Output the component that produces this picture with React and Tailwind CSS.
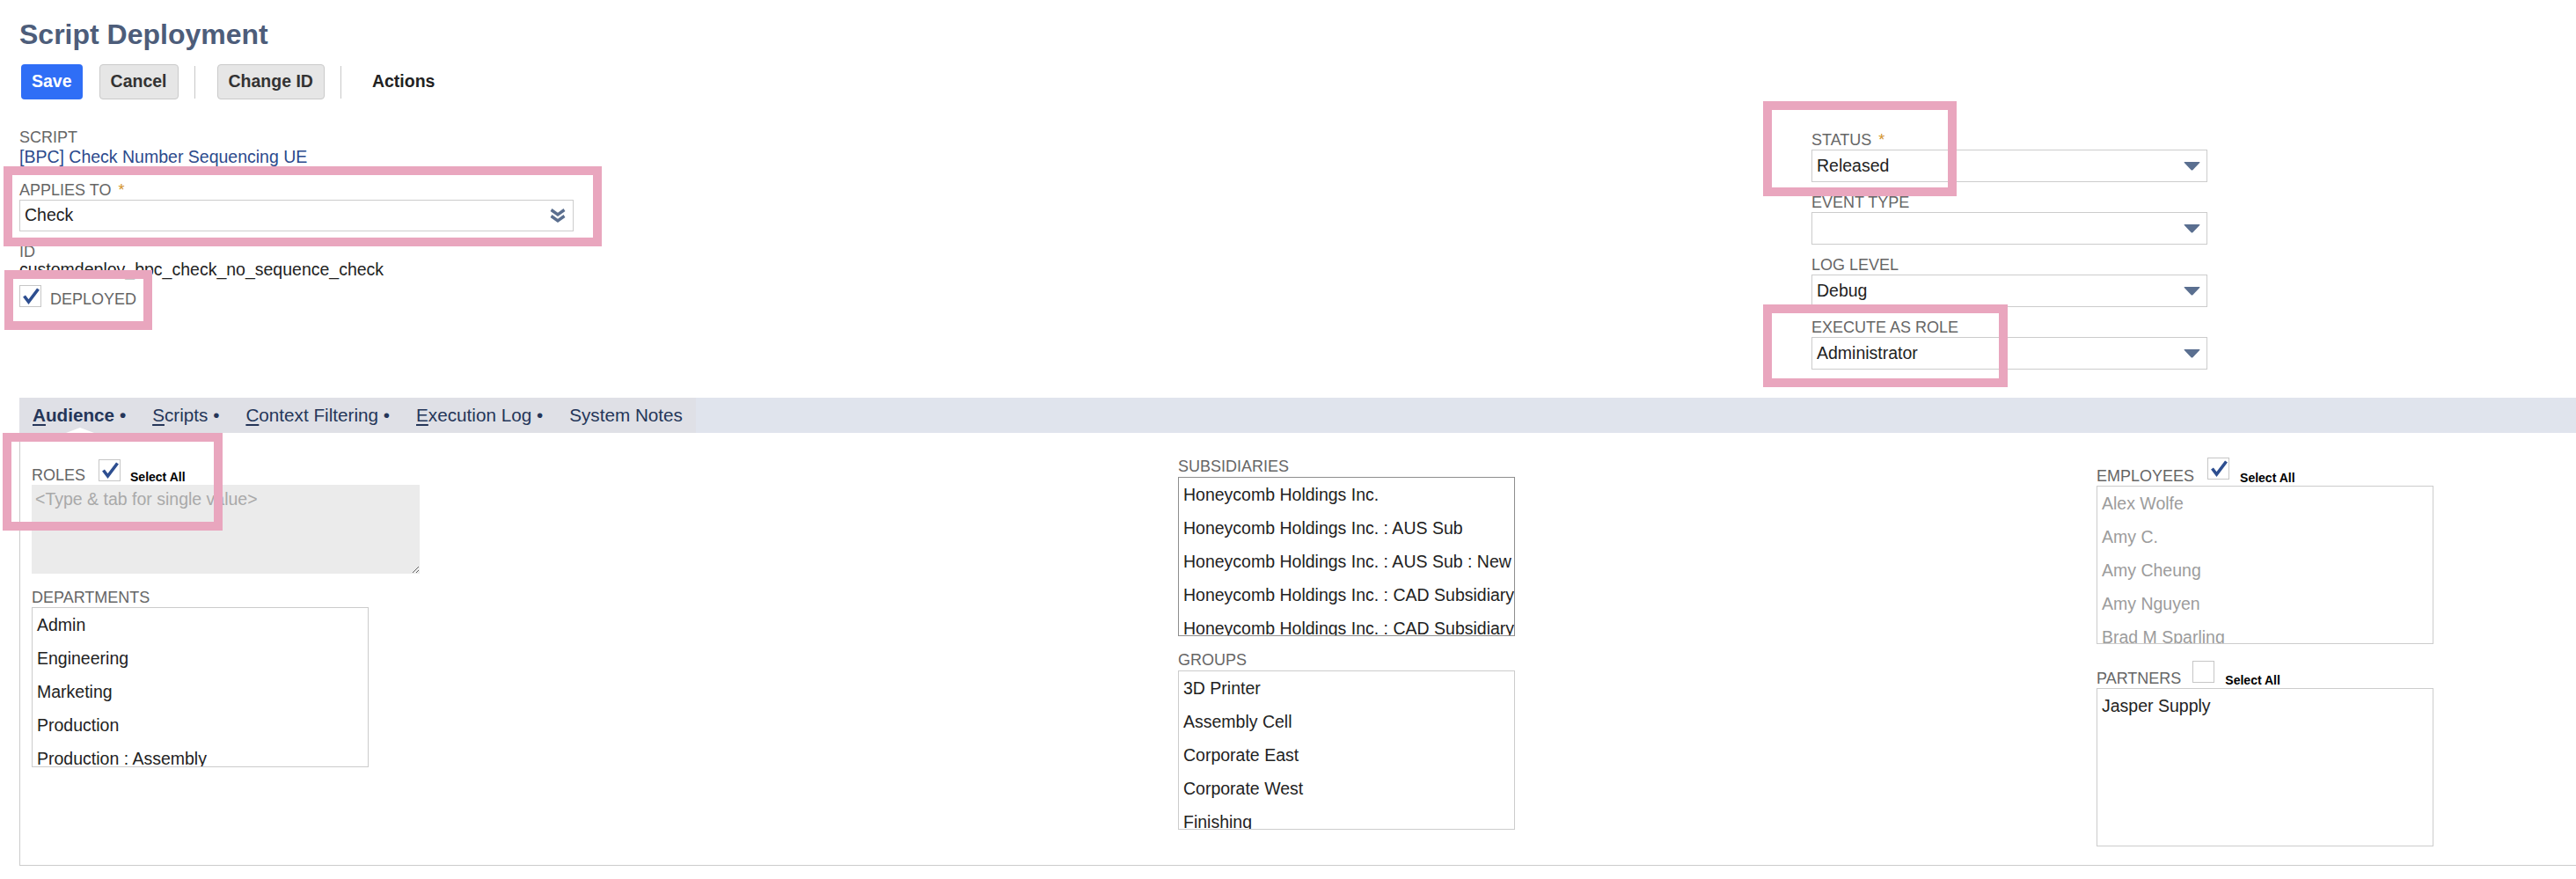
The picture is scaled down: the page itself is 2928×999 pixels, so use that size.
import React from 'react';

const FONT = "font-['Liberation_Sans',Arial,Helvetica,sans-serif]";

const TABS = [
  { key: 'A', rest: 'udience', dot: true, active: true },
  { key: 'S', rest: 'cripts', dot: true },
  { key: 'C', rest: 'ontext Filtering', dot: true },
  { key: 'E', rest: 'xecution Log', dot: true },
  { rest: 'System Notes' },
];

const DEPARTMENTS = ['Admin', 'Engineering', 'Marketing', 'Production', 'Production : Assembly'];
const SUBSIDIARIES = [
  'Honeycomb Holdings Inc.',
  'Honeycomb Holdings Inc. : AUS Sub',
  'Honeycomb Holdings Inc. : AUS Sub : New Zealand',
  'Honeycomb Holdings Inc. : CAD Subsidiary',
  'Honeycomb Holdings Inc. : CAD Subsidiary : Toronto',
];
const GROUPS = ['3D Printer', 'Assembly Cell', 'Corporate East', 'Corporate West', 'Finishing'];
const EMPLOYEES = ['Alex Wolfe', 'Amy C.', 'Amy Cheung', 'Amy Nguyen', 'Brad M Sparling'];

const Label = ({ children, required, className = '' }) => (
  <div className={`h-[22px] leading-[22px] text-[18px] text-[#666] uppercase whitespace-nowrap ${className}`}>
    {children}
    {required && <span className="ml-[8px] text-[#d3952e]">*</span>}
  </div>
);

const CheckBox = ({ checked, className = '' }) => (
  <span className={`relative block w-[25px] h-[25px] border border-[#c6c6c6] bg-white ${className}`}>
    {checked && (
      <svg viewBox="0 0 25 25" className="absolute left-0 top-0 w-[25px] h-[25px] overflow-visible">
        <path d="M4.5 11.5 L9.5 18 L20.5 3.5" fill="none" stroke="#2d4e90" strokeWidth="3.6" strokeLinejoin="miter" />
      </svg>
    )}
  </span>
);

const TriArrow = () => (
  <svg viewBox="0 0 19 10" className="w-[19px] h-[10px]">
    <path d="M1.2 0 H17.8 Q19 0 18.2 1 L10.4 9.2 Q9.5 10 8.6 9.2 L0.8 1 Q0 0 1.2 0 Z" fill="#5a6f90" />
  </svg>
);

const DoubleChevron = () => (
  <svg viewBox="0 0 18 16" className="w-[18px] h-[16px]">
    <path d="M1.5 1.5 L9 6.8 L16.5 1.5" fill="none" stroke="#5a6e8f" strokeWidth="3.4" />
    <path d="M1.5 8.5 L9 13.8 L16.5 8.5" fill="none" stroke="#5a6e8f" strokeWidth="3.4" />
  </svg>
);

const Select = ({ value, className = '', icon = 'tri' }) => (
  <div className={`flex items-center justify-between border border-[#cccccc] bg-white pl-[5px] ${className}`}>
    <span className="text-[19.5px] text-[#222] whitespace-nowrap">{value}</span>
    <span className={icon === 'tri' ? 'mr-[7px] flex' : 'mr-[8px] flex'}>
      {icon === 'tri' ? <TriArrow /> : <DoubleChevron />}
    </span>
  </div>
);

const ListBox = ({ items, className = '', muted }) => (
  <div className={`overflow-hidden w-[383px] bg-white border ${className}`}>
    {items.map((it) => (
      <div
        key={it}
        className={`h-[38px] leading-[38px] px-[5px] text-[19.5px] whitespace-nowrap ${muted ? 'text-[#9c9c9c]' : 'text-[#222]'}`}
      >
        {it}
      </div>
    ))}
  </div>
);

const Marker = ({ className }) => (
  <div className={`absolute border-[10px] border-[#e9a6be] pointer-events-none ${className}`} />
);

export default function App() {
  return (
    <div className={`relative w-full min-h-[999px] bg-white ${FONT}`}>
      {/* header */}
      <div className="px-[22px] pt-[23px]">
        <h1 className="h-[32px] leading-[32px] text-[32px] font-bold text-[#4d5d7a]">Script Deployment</h1>
        <div className="mt-[18px] flex items-center h-[40px] text-[19.5px] font-bold">
          <button className="ml-[2px] h-[40px] px-[12px] rounded-[4px] bg-[#2f6ef6] text-white">Save</button>
          <button className="ml-[19px] h-[40px] px-[12px] rounded-[4px] bg-[#e6e6e6] border border-[#cacaca] text-[#333]">Cancel</button>
          <div className="ml-[18px] w-px h-[37px] bg-[#c8c8c8]" />
          <button className="ml-[25px] h-[40px] px-[12px] rounded-[4px] bg-[#e6e6e6] border border-[#cacaca] text-[#333]">Change ID</button>
          <div className="ml-[18px] w-px h-[37px] bg-[#c8c8c8]" />
          <button className="ml-[23px] h-[40px] px-[12px] text-[#222]">Actions</button>
        </div>
      </div>

      {/* primary fields */}
      <div className="mt-[32px] h-[307px] flex pl-[22px]">
        <div className="w-[2037px]">
          <Label>Script</Label>
          <div className="h-[23px] leading-[23px] text-[19.5px] text-[#2b4a8c]">[BPC] Check Number Sequencing UE</div>
          <Label required className="mt-[15px]">Applies To</Label>
          <Select value="Check" icon="double" className="w-[630px] h-[36px]" />
          <div className="mt-[14px] h-[18px] leading-[18px] text-[18px] text-[#666]">ID</div>
          <div className="h-[23px] leading-[23px] text-[19.5px] text-[#222]">customdeploy_bpc_check_no_sequence_check</div>
          <div className="mt-[7px] flex items-end h-[24px]">
            <CheckBox checked className="w-[24px] h-[24px]" />
            <span className="ml-[10px] leading-none text-[18px] text-[#666]">DEPLOYED</span>
          </div>
        </div>
        <div className="pt-[3px] w-[450px]">
          <Label required>Status</Label>
          <Select value="Released" className="h-[37px]" />
          <Label className="mt-[12px]">Event Type</Label>
          <Select value="" className="h-[37px]" />
          <Label className="mt-[12px]">Log Level</Label>
          <Select value="Debug" className="h-[37px]" />
          <Label className="mt-[12px]">Execute As Role</Label>
          <Select value="Administrator" className="h-[37px]" />
        </div>
      </div>

      {/* tabs */}
      <div className="ml-[22px] h-[40px] flex bg-[#e0e4ed]">
        <div className="flex bg-[#dfe0e6]">
          {TABS.map((t) => (
            <div
              key={t.rest}
              className={`relative px-[15px] h-[40px] leading-[40px] text-[20.7px] text-[#253659] whitespace-nowrap ${t.active ? 'font-bold' : ''}`}
            >
              {t.key && <span className="underline underline-offset-[3px] decoration-[1.5px]">{t.key}</span>}
              {t.rest}
              {t.dot && ' •'}
              {t.active && (
                <svg viewBox="0 0 32 6" className="absolute left-[53px] bottom-0 w-[32px] h-[6px]">
                  <path d="M0 6 L16 0 L32 6 Z" fill="#ffffff" />
                </svg>
              )}
            </div>
          ))}
        </div>
      </div>

      {/* audience panel */}
      <div className="ml-[22px] h-[492px] border-l border-b border-[#cccccc] flex pl-[13px]">
        <div className="w-[1303px]">
          <div className="mt-[31px] h-[26px] flex items-end">
            <span className="leading-none text-[18px] text-[#666]">ROLES</span>
            <CheckBox checked className="ml-[15px] mb-[2px]" />
            <span className="ml-[11px] leading-none text-[14px] font-bold text-black">Select All</span>
          </div>
          <textarea
            readOnly
            placeholder="<Type & tab for single value>"
            className={`block mt-[2px] w-[441px] h-[101px] bg-[#ebebeb] pl-[4px] pt-[5px] text-[19.5px] leading-[23px] placeholder:text-[#a9a9a9] outline-none ${FONT}`}
          />
          <div className="mt-[17px] h-[21px] leading-[21px] text-[18px] text-[#666]">DEPARTMENTS</div>
          <ListBox items={DEPARTMENTS} className="h-[182px] border-[#cccccc]" />
        </div>

        <div className="w-[1044px]">
          <div className="mt-[28px] h-[21px] leading-[21px] text-[18px] text-[#666]">SUBSIDIARIES</div>
          <ListBox items={SUBSIDIARIES} className="mt-[1px] h-[181px] border-[#8e8e8e]" />
          <div className="mt-[17px] h-[21px] leading-[21px] text-[18px] text-[#666]">GROUPS</div>
          <ListBox items={GROUPS} className="mt-[1px] h-[181px] border-[#cccccc]" />
        </div>

        <div>
          <div className="mt-[32px] h-[26px] flex items-end">
            <span className="leading-none text-[18px] text-[#666]">EMPLOYEES</span>
            <CheckBox checked className="ml-[15px] mb-[5px] w-[24px] h-[24px]" />
            <span className="ml-[12px] leading-none text-[14px] font-bold text-black">Select All</span>
          </div>
          <ListBox items={EMPLOYEES} muted className="mt-[2px] h-[180px] border-[#cccccc]" />
          <div className="mt-[18px] h-[30px] flex items-end">
            <span className="leading-none text-[18px] text-[#666]">PARTNERS</span>
            <CheckBox className="ml-[13px] mb-[4px]" />
            <span className="ml-[12px] leading-none text-[14px] font-bold text-black">Select All</span>
          </div>
          <ListBox items={['Jasper Supply']} className="mt-[2px] h-[180px] border-[#cccccc]" />
        </div>
      </div>

      {/* annotation frames */}
      <Marker className="left-[4px] top-[189px] w-[680px] h-[91px]" />
      <Marker className="left-[5px] top-[307px] w-[168px] h-[68px]" />
      <Marker className="left-[2004px] top-[115px] w-[220px] h-[108px]" />
      <Marker className="left-[2004px] top-[346px] w-[278px] h-[94px]" />
      <Marker className="left-[3px] top-[492px] w-[250px] h-[111px]" />
    </div>
  );
}
